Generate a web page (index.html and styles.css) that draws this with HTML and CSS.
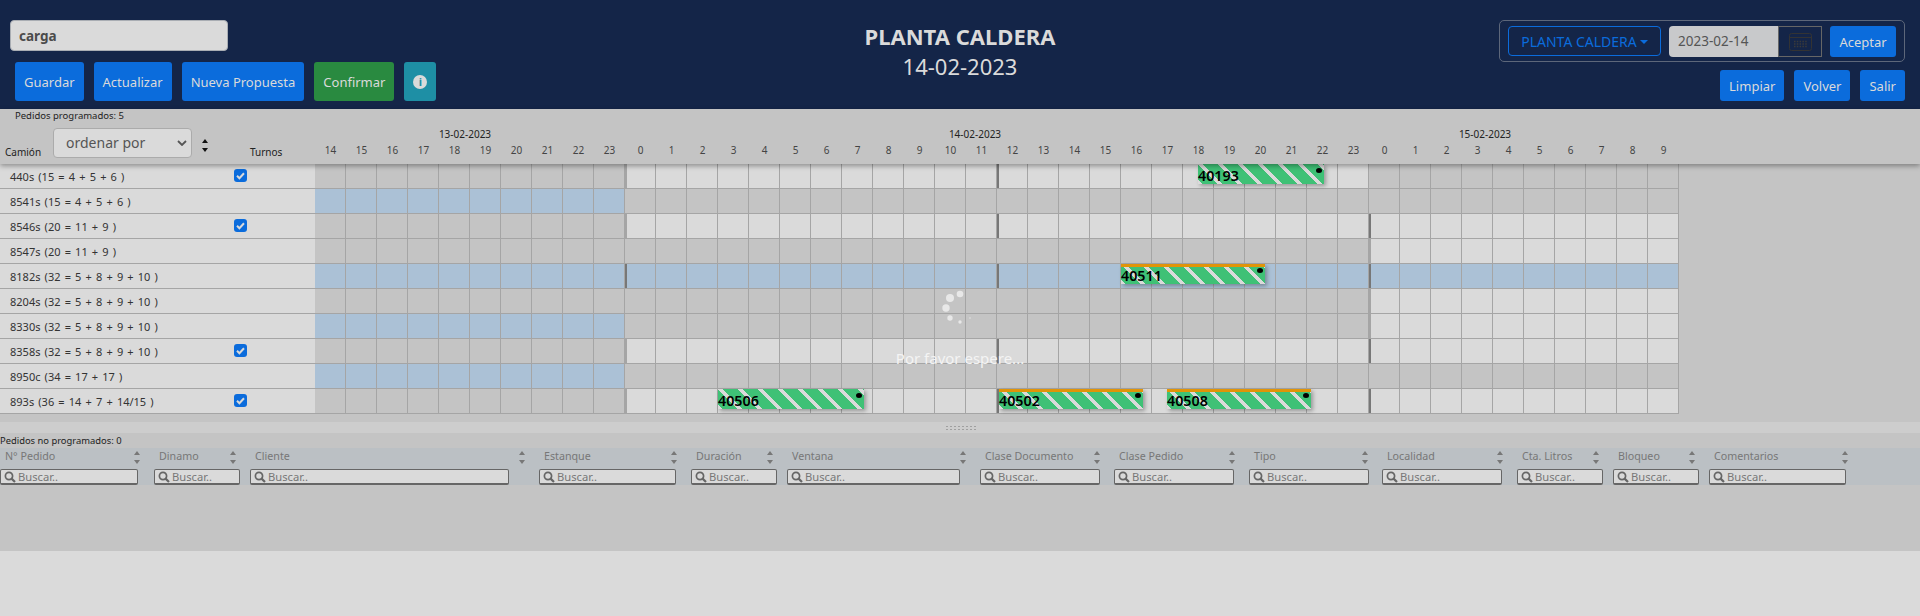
FILE: index.html
```html
<!DOCTYPE html>
<html lang="en">
<head>
    <meta charset="UTF-8">
    <title>Planta Caldera</title>
    <link rel="stylesheet" href="styles.css">
</head>
<body>
    <svg class="defs" width="0" height="0">
        <symbol id="lens" viewBox="0 0 12 12">
            <circle cx="5" cy="5" r="3.6" fill="none" stroke="currentColor" stroke-width="1.7"/>
            <path d="M7.6 7.6L11 11" stroke="currentColor" stroke-width="2.2"/>
        </symbol>
        <symbol id="tick" viewBox="0 0 13 13">
            <rect width="13" height="13" rx="3" fill="#0b6cdc"/>
            <path d="M3 6.8l2.4 2.4L10 4.2" fill="none" stroke="#dadada" stroke-width="2"/>
        </symbol>
    </svg>

    <header class="topbar">
        <div class="top-left">
            <input class="name-input" type="text" value="carga">
            <div class="btn-row">
                <button class="btn">Guardar</button>
                <button class="btn">Actualizar</button>
                <button class="btn">Nueva Propuesta</button>
                <button class="btn btn-green">Confirmar</button>
                <button class="btn btn-info"><span class="info-dot">i</span></button>
            </div>
        </div>
        <div class="top-title">
            <h1>PLANTA CALDERA</h1>
            <p>14-02-2023</p>
        </div>
        <div class="top-right">
            <div class="plant-box">
                <button class="plant-select">PLANTA CALDERA<span class="caret"></span></button>
                <div class="date-group">
                    <span class="date-value">2023-02-14</span>
                    <span class="date-icon">
                        <svg width="23" height="18" viewBox="0 0 23 18" fill="none" stroke="#333">
                            <rect x="0.5" y="0.5" width="22" height="17" rx="2"/>
                            <path d="M1 4.5h21"/>
                            <path d="M5 8.5h13M5 11h13M5 13.5h13" stroke="#3a3a3a" stroke-width="1.5" stroke-dasharray="1.5 1.3"/>
                        </svg>
                    </span>
                </div>
                <button class="btn btn-small">Aceptar</button>
            </div>
            <div class="btn-row-right">
                <button class="btn btn-small">Limpiar</button>
                <button class="btn btn-small">Volver</button>
                <button class="btn btn-small">Salir</button>
            </div>
        </div>
    </header>

    <section class="gantt-head">
        <div class="head-left">
            <div class="count-line">Pedidos programados: 5</div>
            <div class="head-controls">
                <span class="col-camion">Camión</span>
                <div class="order-select">ordenar por
                    <svg width="10" height="6" viewBox="0 0 10 6" fill="none" stroke="#555" stroke-width="1.8"><path d="M1 1l4 4 4-4"/></svg>
                </div>
                <div class="sort-black"><i class="up"></i><i class="down"></i></div>
                <span class="col-turnos">Turnos</span>
            </div>
        </div>
        <div class="dates">
            <span>13-02-2023</span>
            <span>14-02-2023</span>
            <span>15-02-2023</span>
        </div>
        <div class="hours">
            <span>14</span><span>15</span><span>16</span><span>17</span><span>18</span><span>19</span><span>20</span><span>21</span><span>22</span><span>23</span>
            <span>0</span><span>1</span><span>2</span><span>3</span><span>4</span><span>5</span><span>6</span><span>7</span><span>8</span><span>9</span><span>10</span><span>11</span>
            <span>12</span><span>13</span><span>14</span><span>15</span><span>16</span><span>17</span><span>18</span><span>19</span><span>20</span><span>21</span><span>22</span><span>23</span>
            <span>0</span><span>1</span><span>2</span><span>3</span><span>4</span><span>5</span><span>6</span><span>7</span><span>8</span><span>9</span>
        </div>
    </section>

    <section class="rows">
        <div class="row">
            <div class="row-label"><span>440s (15 = 4 + 5 + 6 )</span><svg class="tick"><use href="#tick"/></svg></div>
            <div class="seg d13 off"></div>
            <div class="seg d14 on start-gray noon"></div>
            <div class="seg d15 off"></div>
            <div class="bar b40193"><b>40193</b><i></i></div>
        </div>
        <div class="row">
            <div class="row-label"><span>8541s (15 = 4 + 5 + 6 )</span></div>
            <div class="seg d13 blue"></div>
            <div class="seg d14 off"></div>
            <div class="seg d15 off"></div>
        </div>
        <div class="row">
            <div class="row-label"><span>8546s (20 = 11 + 9 )</span><svg class="tick"><use href="#tick"/></svg></div>
            <div class="seg d13 off"></div>
            <div class="seg d14 on start-gray noon"></div>
            <div class="seg d15 on start-dark"></div>
        </div>
        <div class="row">
            <div class="row-label"><span>8547s (20 = 11 + 9 )</span></div>
            <div class="seg d13 off"></div>
            <div class="seg d14 off"></div>
            <div class="seg d15 on start-gray"></div>
        </div>
        <div class="row">
            <div class="row-label"><span>8182s (32 = 5 + 8 + 9 + 10 )</span></div>
            <div class="seg d13 blue"></div>
            <div class="seg d14 blue start-dark noon"></div>
            <div class="seg d15 blue start-dark"></div>
            <div class="bar late b40511"><b>40511</b><i></i></div>
        </div>
        <div class="row">
            <div class="row-label"><span>8204s (32 = 5 + 8 + 9 + 10 )</span></div>
            <div class="seg d13 off"></div>
            <div class="seg d14 off"></div>
            <div class="seg d15 on start-gray"></div>
        </div>
        <div class="row">
            <div class="row-label"><span>8330s (32 = 5 + 8 + 9 + 10 )</span></div>
            <div class="seg d13 blue"></div>
            <div class="seg d14 off"></div>
            <div class="seg d15 on start-gray"></div>
        </div>
        <div class="row">
            <div class="row-label"><span>8358s (32 = 5 + 8 + 9 + 10 )</span><svg class="tick"><use href="#tick"/></svg></div>
            <div class="seg d13 off"></div>
            <div class="seg d14 on start-gray noon"></div>
            <div class="seg d15 on start-dark"></div>
        </div>
        <div class="row">
            <div class="row-label"><span>8950c (34 = 17 + 17 )</span></div>
            <div class="seg d13 blue"></div>
            <div class="seg d14 off"></div>
            <div class="seg d15 off"></div>
        </div>
        <div class="row">
            <div class="row-label"><span>893s (36 = 14 + 7 + 14/15 )</span><svg class="tick"><use href="#tick"/></svg></div>
            <div class="seg d13 off"></div>
            <div class="seg d14 on start-gray noon"></div>
            <div class="seg d15 on start-dark"></div>
            <div class="bar b40506"><b>40506</b><i></i></div>
            <div class="bar late b40502"><b>40502</b><i></i></div>
            <div class="bar late b40508"><b>40508</b><i></i></div>
        </div>
    </section>

    <div class="splitter"><span class="grip"></span></div>

    <section class="pending">
        <div class="count-line-2">Pedidos no programados: 0</div>
        <div class="filters">
            <div class="filter w138"><div class="filter-head"><span>N° Pedido</span><span class="sort-gray"><i class="up"></i><i class="down"></i></span></div><label class="search"><svg class="lens"><use href="#lens"/></svg>Buscar..</label></div>
            <div class="filter w86"><div class="filter-head"><span>Dinamo</span><span class="sort-gray"><i class="up"></i><i class="down"></i></span></div><label class="search"><svg class="lens"><use href="#lens"/></svg>Buscar..</label></div>
            <div class="filter w259"><div class="filter-head"><span>Cliente</span><span class="sort-gray"><i class="up"></i><i class="down"></i></span></div><label class="search"><svg class="lens"><use href="#lens"/></svg>Buscar..</label></div>
            <div class="filter w137"><div class="filter-head"><span>Estanque</span><span class="sort-gray"><i class="up"></i><i class="down"></i></span></div><label class="search"><svg class="lens"><use href="#lens"/></svg>Buscar..</label></div>
            <div class="filter w86"><div class="filter-head"><span>Duración</span><span class="sort-gray"><i class="up"></i><i class="down"></i></span></div><label class="search"><svg class="lens"><use href="#lens"/></svg>Buscar..</label></div>
            <div class="filter w173"><div class="filter-head"><span>Ventana</span><span class="sort-gray"><i class="up"></i><i class="down"></i></span></div><label class="search"><svg class="lens"><use href="#lens"/></svg>Buscar..</label></div>
            <div class="filter w120"><div class="filter-head"><span>Clase Documento</span><span class="sort-gray"><i class="up"></i><i class="down"></i></span></div><label class="search"><svg class="lens"><use href="#lens"/></svg>Buscar..</label></div>
            <div class="filter w120"><div class="filter-head"><span>Clase Pedido</span><span class="sort-gray"><i class="up"></i><i class="down"></i></span></div><label class="search"><svg class="lens"><use href="#lens"/></svg>Buscar..</label></div>
            <div class="filter w120"><div class="filter-head"><span>Tipo</span><span class="sort-gray"><i class="up"></i><i class="down"></i></span></div><label class="search"><svg class="lens"><use href="#lens"/></svg>Buscar..</label></div>
            <div class="filter w120"><div class="filter-head"><span>Localidad</span><span class="sort-gray"><i class="up"></i><i class="down"></i></span></div><label class="search"><svg class="lens"><use href="#lens"/></svg>Buscar..</label></div>
            <div class="filter w86"><div class="filter-head"><span>Cta. Litros</span><span class="sort-gray"><i class="up"></i><i class="down"></i></span></div><label class="search"><svg class="lens"><use href="#lens"/></svg>Buscar..</label></div>
            <div class="filter w86"><div class="filter-head"><span>Bloqueo</span><span class="sort-gray"><i class="up"></i><i class="down"></i></span></div><label class="search"><svg class="lens"><use href="#lens"/></svg>Buscar..</label></div>
            <div class="filter w137"><div class="filter-head"><span>Comentarios</span><span class="sort-gray"><i class="up"></i><i class="down"></i></span></div><label class="search"><svg class="lens"><use href="#lens"/></svg>Buscar..</label></div>
        </div>
    </section>

    <!-- loading overlay -->
    <div class="loading">
        <svg class="spinner" width="40" height="40" viewBox="0 0 40 40" fill="#e8e8e8">
            <circle cx="10" cy="8" r="4"/>
            <circle cx="20" cy="4" r="3.3"/>
            <circle cx="6" cy="18" r="3.7"/>
            <circle cx="10" cy="28" r="2.7"/>
            <circle cx="20" cy="32" r="1.7"/>
            <circle cx="30" cy="28" r="1" opacity=".5"/>
        </svg>
        <div class="loading-text">Por favor espere...</div>
    </div>
</body>
</html>
```

FILE: styles.css
```css
* {
    box-sizing: border-box;
}
html, body {
    margin: 0;
    padding: 0;
}
body {
    width: 1920px;
    height: 616px;
    overflow: hidden;
    position: relative;
    background-color: #dadada;
    font-family: "Noto Sans", "Liberation Sans", sans-serif;
    color: #222;
}
.defs {
    position: absolute;
}

/* top bar */
.topbar {
    height: 109px;
    background-color: #142548;
    display: grid;
    grid-template-columns: 1fr auto 1fr;
}
.top-left {
    padding: 20px 0 0 10px;
}
.name-input {
    display: block;
    width: 218px;
    height: 31px;
    padding: 0 8px;
    border: 1px solid #a9adb3;
    border-radius: 4px;
    background-color: #dadada;
    font: bold 13.5px "Noto Sans", sans-serif;
    color: #4b4b4b;
}
.btn-row {
    display: flex;
    gap: 10px;
    margin: 11px 0 0 5px;
}
.btn {
    height: 39px;
    padding: 0 9px;
    border: none;
    border-radius: 3px;
    background-color: #0b6cdc;
    color: #dadada;
    font: 13px "Noto Sans", sans-serif;
}
.btn-green {
    background-color: #298a40;
}
.btn-info {
    width: 32px;
    padding: 0;
    background-color: #1e8fa5;
}
.info-dot {
    display: block;
    width: 14px;
    height: 14px;
    margin: auto;
    border-radius: 50%;
    background-color: #dadada;
    color: #1e8fa5;
    font: bold 11px/14px "Noto Sans", sans-serif;
}
.top-title {
    text-align: center;
    color: #dadada;
    padding-top: 21px;
}
.top-title h1 {
    margin: 0;
    font-size: 22px;
    line-height: 30px;
}
.top-title p {
    margin: 0;
    font-size: 22px;
    line-height: 30px;
}
.top-right {
    display: flex;
    flex-direction: column;
    align-items: flex-end;
    padding: 20px 15px 0 0;
}
.plant-box {
    width: 406px;
    height: 42px;
    border: 1px solid #5d677a;
    border-radius: 5px;
    display: flex;
    align-items: flex-start;
    padding: 5px 0 0 8px;
}
.plant-select {
    width: 153px;
    height: 30px;
    border: 1px solid #0b6cdc;
    border-radius: 4px;
    background: none;
    color: #0b6cdc;
    font: 14px "Noto Sans", sans-serif;
    padding: 0;
}
.caret {
    display: inline-block;
    margin-left: 3px;
    vertical-align: 3px;
    border: 4.5px solid transparent;
    border-top-color: #0b6cdc;
    border-bottom: none;
}
.date-group {
    display: flex;
    height: 31px;
    margin-left: 8px;
}
.date-value {
    width: 109px;
    background-color: #c8c9cb;
    border-radius: 4px 0 0 4px;
    color: #555;
    font-size: 13.5px;
    line-height: 31px;
    padding-left: 9px;
}
.date-icon {
    width: 44px;
    border: 1px solid #666;
    display: flex;
    align-items: center;
    justify-content: center;
}
.btn-small {
    height: 31px;
    padding: 0 9px;
}
.plant-box .btn-small {
    width: 66px;
    padding: 0;
    margin-left: 8px;
}
.btn-row-right {
    display: flex;
    gap: 10px;
    margin-top: 8px;
}

/* gantt header */
.gantt-head {
    height: 55px;
    background-color: #c4c4c4;
    position: relative;
    z-index: 2;
    box-shadow: 0 2px 5px rgba(0, 0, 0, 0.35);
}
.head-left {
    width: 315px;
    height: 55px;
}
.count-line {
    font-size: 9.5px;
    line-height: 14px;
    padding-left: 15px;
}
.head-controls {
    display: flex;
    align-items: flex-end;
    height: 35px;
    margin-top: 5px;
    padding-left: 5px;
    position: relative;
    font-size: 10px;
}
.col-camion {
    width: 48px;
    line-height: 14px;
    margin-bottom: 4px;
}
.col-turnos {
    margin-left: 42px;
    line-height: 14px;
    margin-bottom: 4px;
}
.order-select {
    width: 139px;
    height: 30px;
    margin-bottom: 5px;
    border: 1px solid #ababab;
    border-radius: 4px;
    background-color: #dadada;
    color: #555;
    font-size: 14px;
    line-height: 28px;
    padding-left: 12px;
    display: flex;
    justify-content: space-between;
    align-items: center;
    padding-right: 4px;
}
.sort-black {
    width: 6px;
    margin: 0 0 11px 10px;
    display: flex;
    flex-direction: column;
    gap: 5px;
}
.up, .down {
    display: block;
    width: 0;
    border-left: 3px solid transparent;
    border-right: 3px solid transparent;
}
.up {
    border-bottom: 4px solid #111;
}
.down {
    border-top: 4px solid #111;
}
.dates, .hours {
    position: absolute;
    display: flex;
    font-size: 10px;
}
.dates {
    left: 210px;
    top: 18px;
    line-height: 14px;
}
.dates span {
    width: 510px;
    text-align: center;
    color: #222;
}
.hours {
    left: 315px;
    top: 34px;
    line-height: 14px;
    color: #444;
}
.hours span {
    width: 31px;
    text-align: center;
}

/* rows */
.rows {
    height: 258px;
    background-color: #c4c4c4;
}
.row {
    display: flex;
    height: 25px;
    position: relative;
}
.row-label {
    width: 315px;
    background-color: #dadada;
    border-bottom: 1px solid #a5a5a5;
    display: grid;
    grid-template-columns: 224px 13px;
    align-items: center;
    padding-left: 10px;
    font-size: 11px;
    word-spacing: 1.3px;
    color: #333;
}
.tick {
    width: 13px;
    height: 13px;
    grid-column: 2;
    margin-top: -2px;
}
.seg {
    position: relative;
    height: 25px;
    border-bottom: 1px solid #a5a5a5;
    background-image: repeating-linear-gradient(to right, transparent 0, transparent 30px, #a5a5a5 30px, #a5a5a5 31px);
}
.d13, .d15 {
    width: 310px;
}
.d14 {
    width: 744px;
}
.off {
    background-color: #c4c4c4;
}
.on {
    background-color: #dadada;
}
.blue {
    background-color: #abc1d6;
}
.start-gray::before, .start-dark::before, .noon::after {
    content: "";
    position: absolute;
    top: 0;
    bottom: 0;
    left: 0;
    width: 2px;
}
.start-gray::before {
    background-color: #a5a5a5;
}
.start-dark::before, .noon::after {
    background-color: #777;
}
.noon::after {
    left: 372px;
}

/* order bars */
.bar {
    position: absolute;
    top: 0;
    height: 20px;
    z-index: 1;
    background-image: repeating-linear-gradient(45deg, #dadada 0, #dadada 3.4px, #3fc176 3.4px, #3fc176 14.14px);
    box-shadow: 2px 2px 4px rgba(0, 0, 0, 0.3);
    display: flex;
    align-items: flex-end;
}
.bar b {
    font-size: 14.3px;
    line-height: 19px;
    margin-bottom: -1px;
    color: #000;
    font-weight: 600;
}
.bar i {
    position: absolute;
    top: 4px;
    right: 2px;
    width: 6px;
    height: 5px;
    border-radius: 50%;
    background-color: #000;
}
.late {
    border-top: 3px solid #e09408;
}
.late i {
    top: 1px;
}
.b40193 {
    left: 1198px;
    width: 126px;
}
.b40511 {
    left: 1121px;
    width: 144px;
}
.b40506 {
    left: 718px;
    width: 146px;
}
.b40502 {
    left: 999px;
    width: 144px;
}
.b40508 {
    left: 1167px;
    width: 144px;
}

/* splitter */
.splitter {
    height: 11px;
    background-color: #cdcdcd;
    display: flex;
    align-items: center;
    justify-content: center;
}
.grip {
    width: 31px;
    height: 6px;
    background-image: radial-gradient(circle, #a0a0a0 1px, transparent 1px);
    background-size: 4px 3px;
}

/* pedidos no programados */
.pending {
    height: 118px;
    background-color: #c4c4c4;
}
.count-line-2 {
    height: 15px;
    font-size: 9.4px;
    line-height: 15px;
}
.filters {
    height: 37px;
    background-color: #bbc0c4;
    display: grid;
    grid-template-columns: 154px 96px 289px 152px 96px 193px 134px 135px 133px 135px 96px 96px 153px;
}
.filter-head {
    display: flex;
    justify-content: space-between;
    align-items: flex-start;
    height: 21px;
    padding: 0 14px 0 5px;
    font-size: 10.7px;
    line-height: 16px;
    color: #777;
}
.sort-gray {
    display: flex;
    flex-direction: column;
    gap: 5px;
    margin-top: 3px;
}
.sort-gray .up {
    border-bottom-color: #777;
}
.sort-gray .down {
    border-top-color: #777;
}
.search {
    display: flex;
    align-items: center;
    height: 16px;
    border: 1px solid #666;
    border-bottom-width: 2px;
    border-radius: 2px;
    background-color: #dadada;
    padding-left: 3px;
    font-size: 11.2px;
    color: #777;
}
.lens {
    width: 12px;
    height: 12px;
    margin-right: 2px;
    color: #666;
}
.w86 .search { width: 86px; }
.w120 .search { width: 120px; }
.w137 .search { width: 137px; }
.w138 .search { width: 138px; }
.w173 .search { width: 173px; }
.w259 .search { width: 259px; }

/* loading overlay */
.loading {
    position: absolute;
    left: 0;
    top: 0;
    width: 100%;
    height: 100%;
    z-index: 5;
    pointer-events: none;
}
.spinner {
    position: absolute;
    left: 940px;
    top: 290px;
}
.loading-text {
    position: absolute;
    left: 0;
    right: 0;
    top: 347px;
    text-align: center;
    color: #f4f4f4;
    font-size: 15px;
    line-height: 22px;
}
```
